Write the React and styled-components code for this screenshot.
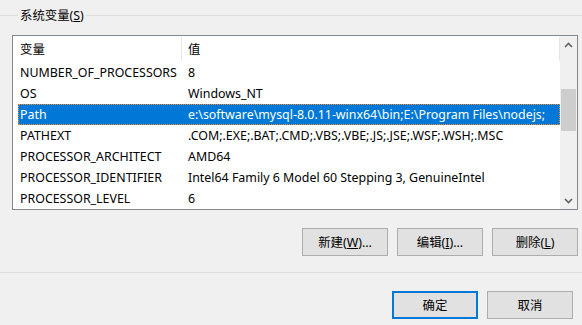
import React from 'react';
import styled, { createGlobalStyle } from 'styled-components';

const GlobalStyle = createGlobalStyle`
	html, body {
		margin: 0;
		padding: 0;
		background: #f0f0f0;
	}
	body {
		font-family: "Noto Sans", "Noto Sans CJK SC", sans-serif;
		font-size: 12.4px;
		color: #000;
	}
`;

const StyledWindow = styled.div`
	width: 582px;
	height: 325px;
	overflow: hidden;
	background: #f0f0f0;
	display: flex;
	flex-direction: column;
	padding-top: 7px;
	box-sizing: border-box;
`;
const StyledGroup = styled.fieldset`
	margin: 0 -1px;
	padding: 11px 4px 16px 12px;
	border: 1px solid #dcdcdc;
	display: flex;
	flex-direction: column;
	gap: 18px;
`;
const StyledLegend = styled.legend`
	margin-left: 6px;
	padding: 0 2px;
	line-height: 17px;
	height: 17px;
`;
const StyledList = styled.div`
	width: 566px;
	height: 175px;
	box-sizing: border-box;
	border: 1px solid #828790;
	background: #fff;
	display: flex;
	overflow: hidden;
`;
const StyledTable = styled.div`
	flex: 1;
	display: flex;
	flex-direction: column;
	overflow: hidden;
`;
const StyledHeader = styled.div`
	height: 26px;
	flex: none;
	display: grid;
	grid-template-columns: 169px 1fr;
`;
const StyledHeadCell = styled.div`
	display: flex;
	align-items: center;
	padding-left: ${(p) => p.$pad}px;
	border-right: 1px solid #e5e5e5;
	height: 24px;
	margin-top: 1px;
`;
const StyledRow = styled.div`
	height: 21px;
	flex: none;
	margin-left: 5px;
	display: grid;
	grid-template-columns: 164px 1fr;
	align-items: center;
	box-sizing: border-box;
	white-space: nowrap;
	background: ${(p) => (p.$selected ? '#0078d7' : 'transparent')};
	color: ${(p) => (p.$selected ? '#fff' : '#000')};
	border: 1px dotted ${(p) => (p.$selected ? '#ff8a28' : 'transparent')};
`;
const StyledCell = styled.span`
	padding-left: ${(p) => p.$pad}px;
	overflow: hidden;
`;
const StyledScrollbar = styled.div`
	width: 17px;
	flex: none;
	background: #f0f0f0;
	display: flex;
	flex-direction: column;
	align-items: center;
`;
const StyledArrow = styled.div`
	height: 17px;
	width: 17px;
	display: flex;
	align-items: center;
	justify-content: center;
	flex: none;
`;
const StyledTrack = styled.div`
	flex: 1;
	width: 100%;
	padding-top: 36px;
	box-sizing: border-box;
	display: flex;
	justify-content: center;
`;
const StyledThumb = styled.div`
	width: 15px;
	height: 42px;
	background: #cdcdcd;
`;
const StyledButtonRow = styled.div`
	display: flex;
	justify-content: flex-end;
	gap: 9px;
	padding-right: ${(p) => p.$right}px;
`;
const StyledButton = styled.button`
	width: 86px;
	height: 28px;
	box-sizing: border-box;
	background: #e1e1e1;
	border: ${(p) => (p.$default ? '2px solid #0078d7' : '1px solid #adadad')};
	font-family: "Noto Sans", "Noto Sans CJK SC", sans-serif;
	font-size: 12.4px;
	color: #000;
	padding: 0;
	display: flex;
	align-items: center;
	justify-content: center;
	u {
		text-decoration: underline;
		text-underline-offset: 1px;
	}
`;
const StyledFooter = styled.div`
	padding-top: 18px;
`;

const rows = [
	['NUMBER_OF_PROCESSORS', '8'],
	['OS', 'Windows_NT'],
	['Path', 'e:\\software\\mysql-8.0.11-winx64\\bin;E:\\Program Files\\nodejs;', true],
	['PATHEXT', '.COM;.EXE;.BAT;.CMD;.VBS;.VBE;.JS;.JSE;.WSF;.WSH;.MSC'],
	['PROCESSOR_ARCHITECT', 'AMD64'],
	['PROCESSOR_IDENTIFIER', 'Intel64 Family 6 Model 60 Stepping 3, GenuineIntel'],
	['PROCESSOR_LEVEL', '6'],
];

function Chevron ({ up }) {
	return (
		<svg width="9" height="6" viewBox="0 0 9 6">
			<path
				d={up ? 'M1 5 L4.5 1.5 L8 5' : 'M1 1 L4.5 4.5 L8 1'}
				fill="none"
				stroke="#606060"
				strokeWidth="1.6"
			/>
		</svg>
	);
}

function App () {
	return (
		<StyledWindow>
			<GlobalStyle />
			<StyledGroup>
				<StyledLegend>系统变量(<u>S</u>)</StyledLegend>
				<StyledList>
					<StyledTable>
						<StyledHeader>
							<StyledHeadCell $pad={7}>变量</StyledHeadCell>
							<StyledHeadCell $pad={6}>值</StyledHeadCell>
						</StyledHeader>
						{rows.map(([name, value, selected]) => (
							<StyledRow key={name} $selected={selected}>
								<StyledCell $pad={1}>{name}</StyledCell>
								<StyledCell $pad={5}>{value}</StyledCell>
							</StyledRow>
						))}
					</StyledTable>
					<StyledScrollbar>
						<StyledArrow><Chevron up /></StyledArrow>
						<StyledTrack><StyledThumb /></StyledTrack>
						<StyledArrow><Chevron /></StyledArrow>
					</StyledScrollbar>
				</StyledList>
				<StyledButtonRow $right={0}>
					<StyledButton>新建(<u>W</u>)...</StyledButton>
					<StyledButton>编辑(<u>I</u>)...</StyledButton>
					<StyledButton>删除(<u>L</u>)</StyledButton>
				</StyledButtonRow>
			</StyledGroup>
			<StyledFooter>
				<StyledButtonRow $right={9}>
					<StyledButton $default>确定</StyledButton>
					<StyledButton>取消</StyledButton>
				</StyledButtonRow>
			</StyledFooter>
		</StyledWindow>
	);
}

export default App;
